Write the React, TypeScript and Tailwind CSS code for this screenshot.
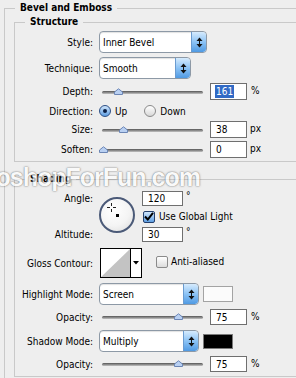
import React from "react";

function UpDown() {
  return (
    <svg width="7" height="11" viewBox="0 0 7 11" fill="#111">
      <path d="M3.5 0.5L6.5 4H0.5Z" />
      <rect x="3" y="4" width="1" height="3" />
      <path d="M0.5 7H6.5L3.5 10.5Z" />
    </svg>
  );
}

function Select({ value, className }: { value: string; className: string }) {
  return (
    <div
      className={`flex overflow-hidden rounded-[4px] border border-[#8d99a6] bg-white shadow-[inset_0_1px_1px_rgba(0,0,0,0.12)] ${className}`}
    >
      <span className="flex flex-1 items-center pl-[3px]">{value}</span>
      <span className="flex w-[15px] items-center justify-center rounded-r-[3px] border-l border-[#6a9bd0] bg-linear-to-b from-[#d6ebfd] via-[#8cc3f5] to-[#4f9ae3]">
        <UpDown />
      </span>
    </div>
  );
}

function Slider({ pos }: { pos: number }) {
  return (
    <div className="relative ml-[3px] h-[8px] w-[101px]">
      <div className="absolute top-[3px] right-0 left-0 h-[3px] rounded-full bg-linear-to-b from-[#555555] to-[#c4c4c4]" />
      <svg
        className="absolute top-0"
        style={{ left: pos - 4.5 }}
        width="9"
        height="7"
        viewBox="0 0 9 7"
      >
        <path d="M0.5 6.5V4L4.5 0.8L8.5 4V6.5Z" fill="#b9d0f2" stroke="#6c86b5" />
      </svg>
    </div>
  );
}

function Num({
  value,
  className,
  selected,
}: {
  value: string;
  className: string;
  selected?: boolean;
}) {
  return (
    <div className={`flex items-center border border-[#6f6f6f] bg-white pl-[4px] ${className}`}>
      {selected ? (
        <span className="bg-[#316ac5] px-[1px] leading-[13px] text-white">{value}</span>
      ) : (
        <span className="pl-[1px]">{value}</span>
      )}
    </div>
  );
}

function Label({ children }: { children: React.ReactNode }) {
  return <span className="w-[78px] shrink-0 text-right">{children}</span>;
}

function Check({ checked }: { checked?: boolean }) {
  return checked ? (
    <span className="flex h-[12px] w-[12px] items-center justify-center rounded-[2px] border border-[#23406e] bg-linear-to-b from-[#cfe6fc] to-[#5f9fe2]">
      <svg width="10" height="9" viewBox="0 0 10 9">
        <path d="M1 4.5L3.8 7.5L9 0.8" fill="none" stroke="#000" strokeWidth="2" />
      </svg>
    </span>
  ) : (
    <span className="block h-[12px] w-[12px] rounded-[2px] border border-[#8a8a8a] bg-linear-to-b from-white to-[#dcdcdc]" />
  );
}

function Radio({ on }: { on?: boolean }) {
  return on ? (
    <span className="flex h-[12px] w-[12px] items-center justify-center rounded-full border border-[#2c4f86] bg-linear-to-b from-[#cfe5fb] to-[#5d9de0]">
      <span className="h-[4px] w-[4px] rounded-full bg-[#0b1f44]" />
    </span>
  ) : (
    <span className="block h-[12px] w-[12px] rounded-full border border-[#8a8a8a] bg-linear-to-b from-white to-[#d8d8d8]" />
  );
}

export default function App() {
  return (
    <div className="relative h-[378px] w-[296px] overflow-hidden bg-[#eeeeee] font-['DejaVu_Sans_Condensed','DejaVu_Sans',sans-serif] text-[10px] text-black">
      <fieldset className="mt-[1px] ml-[4px] h-[420px] w-[320px] border border-[#c9c9c9] pl-[9px]">
        <legend className="ml-[1px] px-[5px] leading-[14px] font-bold">Bevel and Emboss</legend>

        {/* Structure */}
        <fieldset className="w-[300px] border border-[#c9c9c9] pt-[2px] pb-[3px]">
          <legend className="ml-[10px] px-[5px] leading-[14px] font-bold">Structure</legend>

          <div className="flex h-[22px] items-center">
            <Label>Style:</Label>
            <Select value="Inner Bevel" className="ml-[6px] h-[22px] w-[108px]" />
          </div>
          <div className="mt-[4px] flex h-[22px] items-center">
            <Label>Technique:</Label>
            <Select value="Smooth" className="ml-[6px] h-[22px] w-[92px]" />
          </div>
          <div className="mt-[4px] flex h-[17px] items-center">
            <Label>Depth:</Label>
            <div className="ml-[6px]">
              <Slider pos={16} />
            </div>
            <Num value="161" selected className="ml-[7px] h-[17px] w-[37px]" />
            <span className="ml-[4px] self-start">%</span>
          </div>
          <div className="mt-[3px] flex h-[16px] items-center">
            <Label>Direction:</Label>
            <div className="ml-[6px] flex items-center">
              <Radio on />
              <span className="ml-[4px]">Up</span>
              <span className="ml-[17px] flex">
                <Radio />
              </span>
              <span className="ml-[4px]">Down</span>
            </div>
          </div>
          <div className="mt-[2px] flex h-[17px] items-center">
            <Label>Size:</Label>
            <div className="ml-[6px]">
              <Slider pos={21} />
            </div>
            <Num value="38" className="ml-[7px] h-[17px] w-[37px]" />
            <span className="ml-[3px] self-start">px</span>
          </div>
          <div className="mt-[3px] flex h-[17px] items-center">
            <Label>Soften:</Label>
            <div className="ml-[6px]">
              <Slider pos={1} />
            </div>
            <Num value="0" className="ml-[7px] h-[17px] w-[37px]" />
            <span className="ml-[3px] self-start">px</span>
          </div>
        </fieldset>

        {/* Shading */}
        <fieldset className="mt-[10px] w-[300px] border border-[#c9c9c9] pt-[5px] pb-[4px]">
          <legend className="ml-[10px] px-[5px] leading-[14px] font-bold">Shading</legend>

          <div className="flex h-[51px]">
            <div className="flex w-[78px] shrink-0 flex-col justify-between">
              <span className="flex h-[15px] items-center justify-end">Angle:</span>
              <span className="flex h-[15px] items-center justify-end">Altitude:</span>
            </div>
            <div className="relative mt-[6px] ml-[6px] h-[36px] w-[36px] rounded-full border-2 border-[#4b5a78] bg-[radial-gradient(circle_at_40%_35%,#ffffff,#f4f4f4_55%,#dadada)]">
              <svg className="absolute top-[4px] left-[6px]" width="9" height="9" viewBox="0 0 9 9">
                <path d="M4.5 0V3M4.5 6V9M0 4.5H3M6 4.5H9" stroke="#222" strokeWidth="1" />
              </svg>
              <span className="absolute top-[15px] left-[15px] h-[3px] w-[3px] bg-black" />
            </div>
            <div className="ml-[7px] flex flex-col">
              <div className="flex">
                <Num value="120" className="h-[15px] w-[41px]" />
                <span className="ml-[3px] leading-[10px]">°</span>
              </div>
              <div className="mt-[3px] ml-[1px] flex items-center">
                <Check checked />
                <span className="ml-[4px]">Use Global Light</span>
              </div>
              <div className="mt-auto flex">
                <Num value="30" className="h-[15px] w-[41px]" />
                <span className="ml-[3px] leading-[10px]">°</span>
              </div>
            </div>
          </div>

          <div className="mt-[6px] flex h-[30px] items-center">
            <Label>Gloss Contour:</Label>
            <div className="ml-[7px] flex h-[30px] w-[42px] border border-black bg-white">
              <svg width="29" height="28" viewBox="0 0 29 28">
                <path d="M0 28L29 0V28Z" fill="#c3c3c3" />
              </svg>
              <div className="flex flex-1 items-center justify-center border-l border-black">
                <svg width="6" height="4" viewBox="0 0 6 4">
                  <path d="M0 0H6L3 3.5Z" fill="#000" />
                </svg>
              </div>
            </div>
            <div className="-mt-[3px] ml-[14px] flex items-center">
              <Check />
              <span className="ml-[3px]">Anti-aliased</span>
            </div>
          </div>

          <div className="mt-[5px] flex h-[22px] items-center">
            <Label>Highlight Mode:</Label>
            <Select value="Screen" className="ml-[6px] h-[22px] w-[100px]" />
            <span className="ml-[4px] h-[16px] w-[30px] border border-[#a3a3a3] bg-[#fbfbfb]" />
          </div>
          <div className="mt-[4px] flex h-[16px] items-center">
            <Label>Opacity:</Label>
            <div className="ml-[6px]">
              <Slider pos={76} />
            </div>
            <Num value="75" className="ml-[7px] h-[16px] w-[37px]" />
            <span className="ml-[4px] self-start">%</span>
          </div>
          <div className="mt-[5px] flex h-[22px] items-center">
            <Label>Shadow Mode:</Label>
            <Select value="Multiply" className="ml-[6px] h-[22px] w-[100px]" />
            <span className="ml-[4px] h-[15px] w-[30px] border border-[#7a7a7a] bg-black" />
          </div>
          <div className="mt-[4px] flex h-[16px] items-center">
            <Label>Opacity:</Label>
            <div className="ml-[6px]">
              <Slider pos={76} />
            </div>
            <Num value="75" className="ml-[7px] h-[16px] w-[37px]" />
            <span className="ml-[4px] self-start">%</span>
          </div>
        </fieldset>
      </fieldset>

      <div className="pointer-events-none absolute top-[165px] right-[96px] z-10 font-['Liberation_Sans',sans-serif] text-[25px] leading-none font-bold tracking-[-1px] whitespace-nowrap text-white opacity-[0.7] [text-shadow:0_0_2px_#555,0_0_1px_#666]">
        PhotoshopForFun.com
      </div>
    </div>
  );
}
